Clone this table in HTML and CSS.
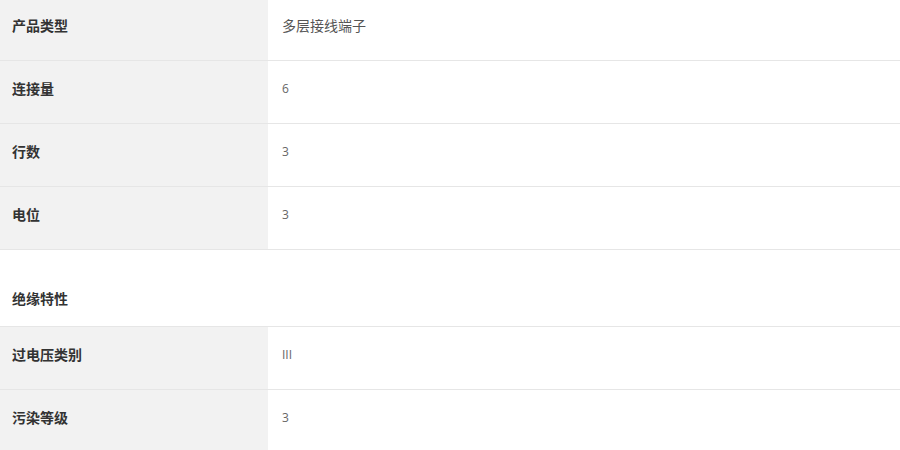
FILE: index.html
```html
<!DOCTYPE html>
<html lang="zh-CN">
<head>
<meta charset="utf-8">
<title>产品参数</title>
<link rel="stylesheet" href="styles.css">
</head>
<body>
<div class="specs">
  <div class="row"><div class="label">产品类型</div><div class="value cjk">多层接线端子</div></div>
  <div class="row"><div class="label">连接量</div><div class="value">6</div></div>
  <div class="row"><div class="label">行数</div><div class="value">3</div></div>
  <div class="row"><div class="label">电位</div><div class="value">3</div></div>
  <div class="section">绝缘特性</div>
  <div class="row"><div class="label">过电压类别</div><div class="value">III</div></div>
  <div class="row"><div class="label">污染等级</div><div class="value">3</div></div>
</div>
</body>
</html>
```
FILE: styles.css
```css
html, body {
  margin: 0;
  padding: 0;
  background: #fff;
}
body {
  font-family: "Open Sans", "Noto Sans CJK SC", sans-serif;
  overflow: hidden;
}
.specs {
  margin-top: -2px;
}
.row {
  display: flex;
  height: 63px;
  box-sizing: border-box;
  border-bottom: 1px solid #e6e6e6;
}
.label {
  width: 268px;
  flex: none;
  background: #f2f2f2;
  box-sizing: border-box;
  padding: 17px 12px 0;
  font-family: "Noto Sans CJK SC", sans-serif;
  font-weight: 700;
  font-size: 14px;
  line-height: 20px;
  color: #333;
}
.value {
  flex: 1;
  padding: 18px 14px 0;
  font-size: 12px;
  line-height: 20px;
  color: #666;
}
.value.cjk {
  font-family: "Noto Sans CJK SC", sans-serif;
  font-size: 14px;
  padding-top: 17px;
  color: #555;
}
.section {
  height: 77px;
  box-sizing: border-box;
  border-bottom: 1px solid #e6e6e6;
  padding: 38px 12px 0;
  font-family: "Noto Sans CJK SC", sans-serif;
  font-weight: 700;
  font-size: 14px;
  line-height: 20px;
  color: #333;
}
```
